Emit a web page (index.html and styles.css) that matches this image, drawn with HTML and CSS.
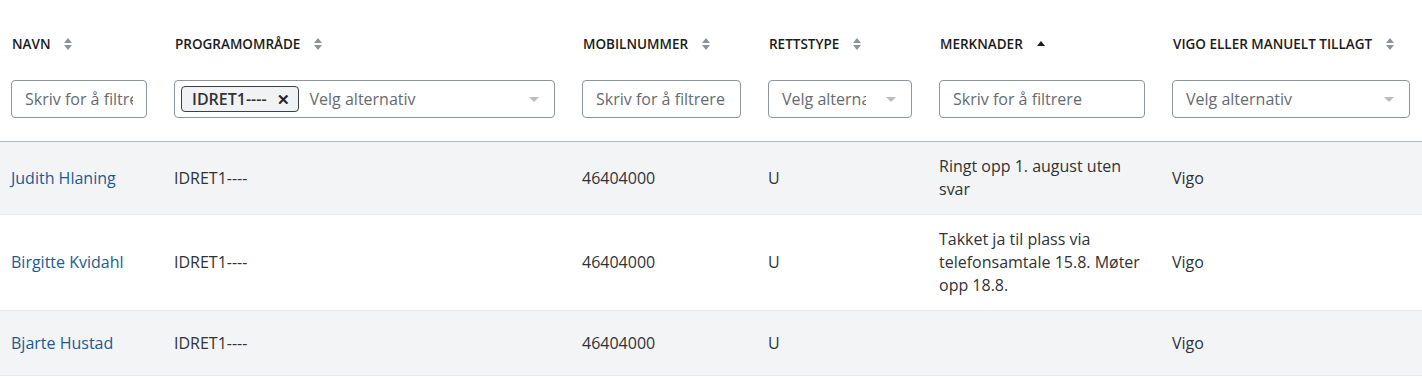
FILE: index.html
```html
<!DOCTYPE html>
<html>
<head>
    <meta charset="UTF-8">
    <title>Søkere</title>
    <link rel="stylesheet" href="styles.css">
</head>
<body>
<table class="grid">
    <colgroup>
        <col style="width: 163px">
        <col style="width: 408px">
        <col style="width: 186px">
        <col style="width: 171px">
        <col style="width: 233px">
        <col style="width: 261px">
    </colgroup>
    <thead>
    <tr>
        <th>
            <div class="title">Navn <span class="sort"></span></div>
            <input class="filter" type="text" placeholder="Skriv for å filtrere"/>
        </th>
        <th>
            <div class="title">Programområde <span class="sort"></span></div>
            <div class="select">
                <div class="values">
                    <span class="tag">IDRET1---- <span class="remove">&#x2715;</span></span>
                    <span class="placeholder">Velg alternativ</span>
                </div>
                <span class="caret"></span>
            </div>
        </th>
        <th>
            <div class="title">Mobilnummer <span class="sort"></span></div>
            <input class="filter" type="text" placeholder="Skriv for å filtrere"/>
        </th>
        <th>
            <div class="title">Rettstype <span class="sort"></span></div>
            <div class="select">
                <div class="values"><span class="placeholder">Velg alternativ</span></div>
                <span class="caret"></span>
            </div>
        </th>
        <th>
            <div class="title">Merknader <span class="sort asc"></span></div>
            <input class="filter" type="text" placeholder="Skriv for å filtrere"/>
        </th>
        <th class="last">
            <div class="title">Vigo eller manuelt tillagt <span class="sort"></span></div>
            <div class="select">
                <div class="values"><span class="placeholder">Velg alternativ</span></div>
                <span class="caret"></span>
            </div>
        </th>
    </tr>
    </thead>
    <tbody>
    <tr>
        <td><a href="#">Judith Hlaning</a></td>
        <td>IDRET1----</td>
        <td>46404000</td>
        <td>U</td>
        <td>Ringt opp 1. august uten svar</td>
        <td class="last">Vigo</td>
    </tr>
    <tr>
        <td><a href="#">Birgitte Kvidahl</a></td>
        <td>IDRET1----</td>
        <td>46404000</td>
        <td>U</td>
        <td>Takket ja til plass via telefonsamtale 15.8. Møter opp 18.8.</td>
        <td class="last">Vigo</td>
    </tr>
    <tr>
        <td><a href="#">Bjarte Hustad</a></td>
        <td>IDRET1----</td>
        <td>46404000</td>
        <td>U</td>
        <td></td>
        <td class="last">Vigo</td>
    </tr>
    </tbody>
</table>
</body>
</html>
```

FILE: styles.css
```css
body {
    margin: 0;
    background: white;
    font-family: "Open Sans", "Noto Sans", sans-serif;
    color: #2f3338;
}

.grid {
    width: 1422px;
    border-collapse: collapse;
    table-layout: fixed;
}

th {
    text-align: left;
    vertical-align: top;
    padding: 35px 16px 23px 11px;
    border-bottom: 1px solid #b8bbc0;
}

th.last, td.last {
    padding-right: 12px;
}

.title {
    display: flex;
    align-items: center;
    height: 18px;
    padding-left: 1px;
    font-size: 13.5px;
    font-weight: 600;
    text-transform: uppercase;
    color: #1b1b1b;
    white-space: nowrap;
    margin-bottom: 27px;
}

.sort {
    display: inline-block;
    position: relative;
    width: 9px;
    height: 12px;
    margin-left: 14px;
}

.sort::before, .sort::after {
    content: "";
    position: absolute;
    left: 0;
    border-left: 4.5px solid transparent;
    border-right: 4.5px solid transparent;
}

.sort::before {
    top: 0;
    border-bottom: 5px solid #8c939b;
}

.sort::after {
    bottom: 0;
    border-top: 5px solid #8c939b;
}

.sort.asc::before {
    top: 3px;
    border-bottom-color: #1b1b1b;
}

.sort.asc::after {
    display: none;
}

.filter {
    box-sizing: border-box;
    width: 100%;
    height: 38px;
    padding: 0 13px;
    border: 1px solid #8d949c;
    border-radius: 4px;
    font-family: inherit;
    font-size: 16px;
    color: #333;
    background: white;
}

.filter::placeholder {
    color: #646b73;
}

.select {
    box-sizing: border-box;
    display: flex;
    align-items: center;
    height: 38px;
    border: 1px solid #8d949c;
    border-radius: 4px;
    padding: 0 15px 0 6px;
    background: white;
}

.values {
    flex: 1;
    display: flex;
    align-items: center;
    overflow: hidden;
    white-space: nowrap;
    font-size: 16px;
    font-weight: 400;
}

.placeholder {
    color: #646b73;
    padding-left: 7px;
}

.tag {
    display: inline-flex;
    align-items: center;
    height: 24px;
    padding: 0 8px 0 10px;
    margin-right: 4px;
    border: 1px solid #3c4148;
    border-radius: 4px;
    background: #f1f2f4;
    color: #333;
    font-size: 16px;
    font-weight: 600;
}

.remove {
    margin-left: 10px;
    font-size: 15px;
    font-weight: 700;
    color: #222;
}

.caret {
    width: 0;
    height: 0;
    margin-left: 20px;
    border-left: 5px solid transparent;
    border-right: 5px solid transparent;
    border-top: 5px solid #b9bdc2;
}

td {
    height: 38px;
    padding: 13px 16px 13px 11px;
    font-size: 16px;
    line-height: 23px;
    border-bottom: 1px solid #e8e9eb;
}

tbody tr:nth-child(odd) {
    background: #f3f4f6;
}

td a {
    color: #1a5a96;
    text-decoration: none;
}
```
